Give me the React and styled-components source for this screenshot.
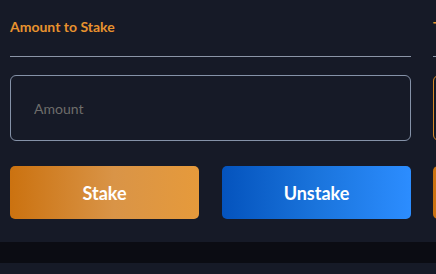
import styled, { createGlobalStyle } from 'styled-components'

const GlobalStyle = createGlobalStyle`
  body {
    margin: 0;
    background: #161a27;
    font-family: Lato, "Open Sans", sans-serif;
  }
`

const Page = styled.div`
  width: 436px;
  height: 274px;
  overflow: hidden;
  display: flex;
  flex-direction: column;
`

const Columns = styled.div`
  display: flex;
  gap: 22px;
  padding: 0 0 0 10px;
  height: 242px;
`

const Column = styled.section`
  flex: 0 0 401px;
  display: flex;
  flex-direction: column;
`

const Title = styled.h2`
  margin: 0;
  padding: 18px 0 0;
  height: 57px;
  box-sizing: border-box;
  font-size: 14px;
  line-height: 17px;
  font-weight: 700;
  color: #e8922e;
  border-bottom: 1px solid #8b95a7;
`

const Input = styled.input`
  margin-top: 18px;
  height: 66px;
  box-sizing: border-box;
  padding: 0 23px;
  background: transparent;
  border: 1px solid ${(p) => (p.$accent ? '#d9892a' : '#8592a8')};
  border-radius: 6px;
  font-family: Lato, "Open Sans", sans-serif;
  font-size: 14px;
  color: #ddd;
  outline: none;

  &::placeholder {
    color: #6e6d6b;
  }
`

const Buttons = styled.div`
  margin-top: 25px;
  display: flex;
  gap: 23px;
`

const Button = styled.button`
  flex: 0 0 189px;
  height: 53px;
  border: none;
  border-radius: 5px;
  font-family: Lato, "Open Sans", sans-serif;
  font-size: 18px;
  font-weight: 700;
  color: #ffffff;
  background: ${(p) =>
    p.$variant === 'blue'
      ? 'linear-gradient(90deg, #0453bd 0%, #1a74dc 50%, #2c8dff 100%)'
      : 'linear-gradient(90deg, #cb7210 0%, #d99447 55%, #e69a3b 100%)'};
`

const Footer = styled.div`
  height: 21px;
  background: #0b0c13;
`

function StakePanel({ title, accent }) {
  return (
    <Column>
      <Title>{title}</Title>
      <Input placeholder="Amount" $accent={accent} />
      <Buttons>
        <Button>Stake</Button>
        <Button $variant="blue">Unstake</Button>
      </Buttons>
    </Column>
  )
}

function App() {
  return (
    <Page>
      <GlobalStyle />
      <Columns>
        <StakePanel title="Amount to Stake" />
        <StakePanel title="Tokens to Claim" accent />
      </Columns>
      <Footer />
    </Page>
  )
}

export default App
